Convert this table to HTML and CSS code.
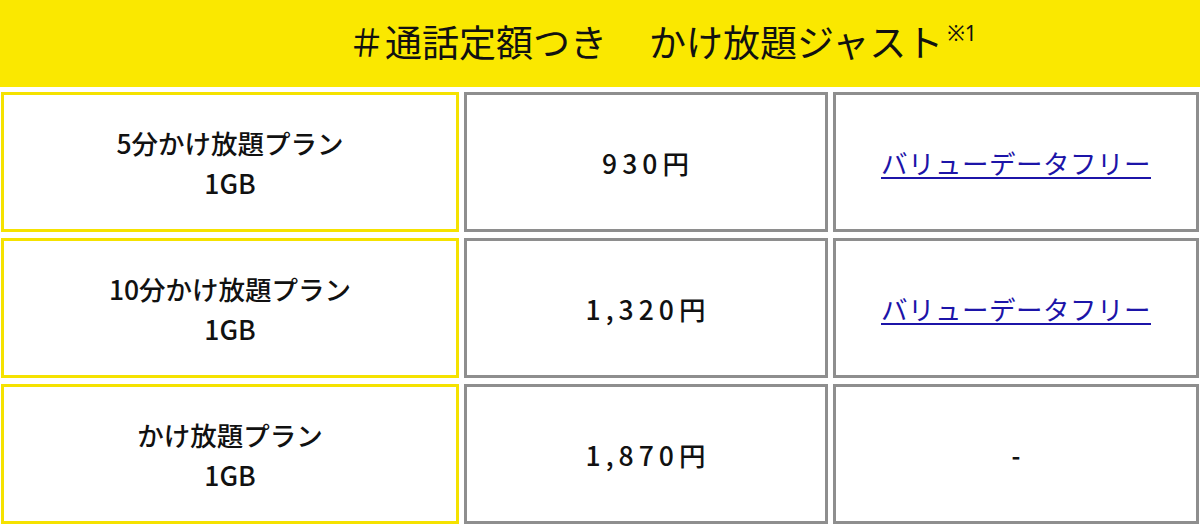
FILE: index.html
```html
<!DOCTYPE html>
<html lang="ja">
<head>
<meta charset="utf-8">
<link rel="stylesheet" href="styles.css">
</head>
<body>
<div class="page">
  <header class="banner">
    <h1 class="title">＃通話定額つき<span class="gap"></span>かけ放題ジャスト<sup class="note">※1</sup></h1>
  </header>
  <div class="grid">
    <div class="cell plan"><span>5分かけ放題プラン</span><span>1GB</span></div>
    <div class="cell price">930円</div>
    <div class="cell extra"><a href="#" class="link">バリューデータフリー</a></div>

    <div class="cell plan"><span>10分かけ放題プラン</span><span>1GB</span></div>
    <div class="cell price">1,320円</div>
    <div class="cell extra"><a href="#" class="link">バリューデータフリー</a></div>

    <div class="cell plan"><span>かけ放題プラン</span><span>1GB</span></div>
    <div class="cell price">1,870円</div>
    <div class="cell extra dash">-</div>
  </div>
</div>
</body>
</html>
```

FILE: styles.css
```css
html, body {
  margin: 0;
  padding: 0;
  background: #ffffff;
}
body {
  font-family: "Noto Sans CJK JP", "Noto Sans", sans-serif;
  color: #111111;
}
.page {
  width: 1200px;
}
.banner {
  height: 87px;
  background: #fae800;
  display: flex;
  align-items: center;
  justify-content: flex-start;
  padding-left: 348px;
  box-sizing: border-box;
}
.title {
  margin: 0;
  font-size: 37px;
  font-weight: 400;
  line-height: 1;
  padding-bottom: 4px;
  display: flex;
  align-items: center;
}
.gap {
  display: inline-block;
  width: 42px;
}
.note {
  font-family: "Noto Sans", "Noto Sans CJK JP", sans-serif;
  font-size: 21px;
  line-height: 1;
  align-self: flex-start;
  margin-top: 0;
  margin-left: 4px;
}
.grid {
  display: grid;
  grid-template-columns: 458px 364px 366px;
  grid-template-rows: 140px 140px 140px;
  column-gap: 5px;
  row-gap: 6px;
  margin: 5px 0 0 1px;
}
.cell {
  box-sizing: border-box;
  display: flex;
  flex-direction: column;
  align-items: center;
  justify-content: center;
  font-size: 26.5px;
  font-weight: 500;
  background: #ffffff;
}
.plan {
  border: 3px solid #f5e200;
  line-height: 40px;
  padding-top: 2px;
}
.price, .extra {
  border: 3px solid #8e8e8e;
}
.price {
  letter-spacing: 5px;
  font-size: 26.5px;
  padding-left: 4px;
}
.link {
  color: #1c14a8;
  text-decoration: underline;
  text-underline-offset: 3px;
  font-weight: 400;
  font-size: 26.5px;
  letter-spacing: 0.5px;
}
.dash {
  font-size: 24px;
  font-weight: 700;
}
```
